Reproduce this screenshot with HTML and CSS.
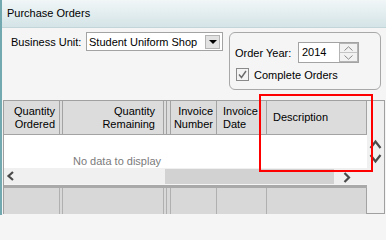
FILE: index.html
```html
<!DOCTYPE html>
<html>
<head>
<meta charset="utf-8">
<link rel="stylesheet" href="styles.css">
</head>
<body>
<div class="window">
  <div class="titlebar">Purchase Orders</div>
  <div class="filters">
    <div class="bu">
      <span class="bu-label">Business Unit:</span>
      <div class="select">
        <span class="select-text">Student Uniform Shop</span>
        <span class="select-btn"><span class="tri"></span></span>
      </div>
    </div>
    <div class="yearbox">
      <div class="year-row">
        <span class="year-label">Order Year:</span>
        <div class="num">
          <span class="num-val">2014</span>
          <span class="spin">
            <span class="spin-half"><svg width="9" height="5" viewBox="0 0 9 5"><polyline points="0.5,4.5 4.5,0.8 8.5,4.5" fill="none" stroke="#8a8a8a" stroke-width="1"/></svg></span>
            <span class="spin-half spin-down"><svg width="9" height="5" viewBox="0 0 9 5"><polyline points="0.5,0.5 4.5,4.2 8.5,0.5" fill="none" stroke="#8a8a8a" stroke-width="1"/></svg></span>
          </span>
        </div>
      </div>
      <div class="check-row">
        <span class="cb"><svg width="11" height="11" viewBox="0 0 11 11"><polyline points="2,5.5 4.5,8.5 9,2" fill="none" stroke="#6a6a6a" stroke-width="1.4"/></svg></span>
        <span class="cb-label">Complete Orders</span>
      </div>
    </div>
  </div>
  <div class="grid">
    <div class="main">
      <div class="hdr">
        <div class="cell c1 right"><span>Quantity<br>Ordered</span></div>
        <div class="cell s1"></div>
        <div class="cell c2 right pr8"><span>Quantity<br>Remaining</span></div>
        <div class="cell s2"></div>
        <div class="cell s3"></div>
        <div class="cell c3 right pr3"><span>Invoice<br>Number</span></div>
        <div class="cell c4 left"><span>Invoice<br>Date</span></div>
        <div class="cell c5 left"><span>Description</span></div>
      </div>
      <div class="gbody"><span class="empty">No data to display</span></div>
      <div class="hscroll">
        <div class="hs-left"><svg width="10" height="10" viewBox="0 0 10 10"><polyline points="7,1 2.5,5 7,9" fill="none" stroke="#4a4a4a" stroke-width="2.2"/></svg></div>
        <div class="hs-thumb"></div>
        <div class="hs-right"><svg width="10" height="11" viewBox="0 0 10 11"><polyline points="2.5,1 7,5.5 2.5,10" fill="none" stroke="#4a4a4a" stroke-width="2.2"/></svg></div>
      </div>
      <div class="ftr">
        <div class="fcell c1"></div>
        <div class="fcell s1"></div>
        <div class="fcell c2"></div>
        <div class="fcell s2"></div>
        <div class="fcell s3"></div>
        <div class="fcell c3"></div>
        <div class="fcell c4"></div>
        <div class="fcell c5"></div>
      </div>
    </div>
    <div class="vscroll">
      <svg width="13" height="26" viewBox="0 0 13 26"><polyline points="1.5,9 6.5,2.5 11.5,9" fill="none" stroke="#4a4a4a" stroke-width="2.2"/><polyline points="1.5,16 6.5,22.5 11.5,16" fill="none" stroke="#4a4a4a" stroke-width="2.2"/></svg>
    </div>
  </div>
  <div class="highlight"></div>
</div>
</body>
</html>
```

FILE: styles.css
```css
* { box-sizing: border-box; }
html, body { margin: 0; padding: 0; }
body {
  font-family: "Liberation Sans", Arial, sans-serif;
  font-size: 11px;
  color: #000;
  background: #f5f5f5;
}
.window {
  position: relative;
  width: 386px;
  height: 215px;
  border-left: 2px solid #72a9b1;
  background: #f5f5f5;
  overflow: hidden;
}
.titlebar {
  height: 28px;
  line-height: 27px;
  padding-left: 5px;
  background: linear-gradient(#f1f6f7, #d4e4e7);
  border-bottom: 1px solid #c2d6d9;
}
.filters {
  display: flex;
  align-items: flex-start;
  padding: 4px 0 0 9px;
}
.bu {
  display: flex;
  align-items: center;
  height: 19px;
}
.bu-label {
  width: 75px;
}
.select {
  display: flex;
  align-items: center;
  width: 137px;
  height: 19px;
  border: 1px solid #a3a3a3;
  background: #fff;
}
.select-text {
  padding-left: 2px;
  white-space: nowrap;
}
.select-btn {
  margin-left: auto;
  margin-right: 2px;
  width: 15px;
  height: 14px;
  border: 1px solid #b4b4b4;
  background: #e2e2e2;
  display: flex;
  align-items: center;
  justify-content: center;
}
.tri {
  width: 0;
  height: 0;
  border-left: 4px solid transparent;
  border-right: 4px solid transparent;
  border-top: 4px solid #000;
}
.yearbox {
  margin-left: 6px;
  width: 152px;
  height: 58px;
  border: 1px solid #a8a8a8;
  border-radius: 6px;
  padding: 9px 0 0 5px;
}
.year-row {
  display: flex;
  align-items: center;
  height: 21px;
}
.year-label {
  width: 63px;
}
.num {
  display: flex;
  width: 61px;
  height: 21px;
  border: 1px solid #a3a3a3;
  background: #fff;
}
.num-val {
  padding-left: 3px;
  line-height: 19px;
}
.spin {
  margin-left: auto;
  width: 19px;
  height: 19px;
  border: 1px solid #b4b4b4;
  background: #f2f2f2;
  display: flex;
  flex-direction: column;
}
.spin-half {
  flex: 1;
  display: flex;
  align-items: center;
  justify-content: center;
}
.spin-down {
  border-top: 1px solid #c4c4c4;
}
.check-row {
  display: flex;
  align-items: center;
  margin-top: 5px;
  height: 13px;
}
.cb {
  margin-left: 1px;
  width: 13px;
  height: 13px;
  border: 1px solid #8a8a8a;
  background: #f3f3f3;
  display: flex;
}
.cb-label {
  margin-left: 5px;
}
.grid {
  display: flex;
  margin: 10px 0 0 1px;
  width: 382px;
  height: 114px;
  border: 1px solid #a0a0a0;
}
.main {
  width: 363px;
  display: flex;
  flex-direction: column;
}
.hdr {
  display: flex;
  height: 34px;
  background: #dcdcdc;
  border-bottom: 1px solid #a3a3a3;
}
.cell {
  height: 33px;
  border-right: 1px solid #a3a3a3;
  display: flex;
  align-items: center;
  line-height: 13px;
}
.c1 { width: 56px; }
.s1 { width: 3px; }
.c2 { width: 101px; }
.s2 { width: 3px; }
.s3 { width: 4px; }
.c3 { width: 46px; }
.c4 { width: 50px; }
.c5 { width: 100px; }
.right { justify-content: flex-end; text-align: right; padding-right: 4px; }
.pr8 { padding-right: 8px; }
.pr3 { padding-right: 3px; }
.left { padding-left: 6px; }
.gbody {
  height: 33px;
  background: #fff;
  padding: 20px 0 0 69px;
  line-height: 13px;
}
.empty {
  color: #7b7b7b;
}
.hscroll {
  display: flex;
  height: 16px;
  background: #f0f0f0;
}
.hs-left {
  width: 161px;
  padding: 3px 0 0 2px;
}
.hs-thumb {
  width: 169px;
  height: 15px;
  margin-top: 1px;
  background: #d2d2d2;
}
.hs-right {
  padding: 4px 0 0 8px;
}
.ftr {
  display: flex;
  height: 29px;
  margin-top: 1px;
  border-top: 3px solid #a9a9a9;
  background: #d8d8d8;
}
.fcell {
  height: 26px;
  border-right: 1px solid #b0b0b0;
}
.ftr .c5 { border-right-color: #a3a3a3; }
.vscroll {
  width: 17px;
  background: #f0f0f0;
  padding: 38px 0 0 2px;
}
.highlight {
  position: absolute;
  left: 257px;
  top: 94px;
  width: 114px;
  height: 78px;
  border: 2px solid #ff0000;
}
```
